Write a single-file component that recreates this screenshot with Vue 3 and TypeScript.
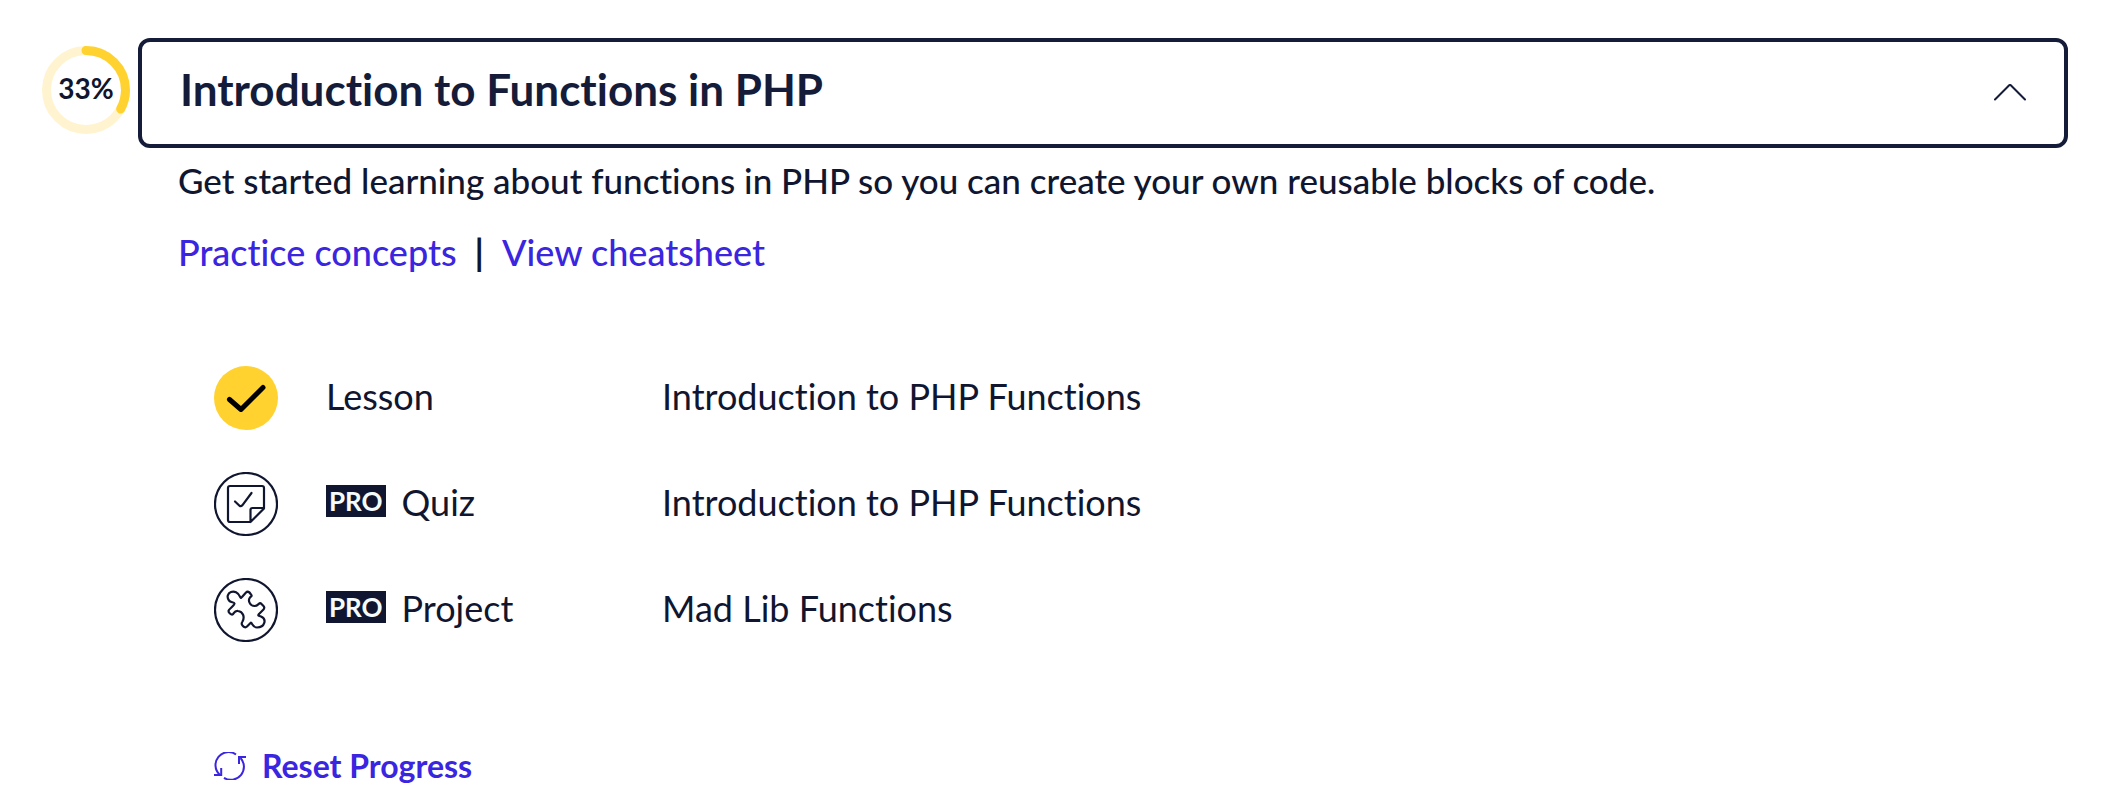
<script setup lang="ts">
import { computed, ref } from 'vue'

type Status = 'done' | 'quiz' | 'project'

interface Item {
  status: Status
  pro: boolean
  kind: string
  title: string
}

const open = ref(true)
const percent = ref(33)

const items: Item[] = [
  { status: 'done', pro: false, kind: 'Lesson', title: 'Introduction to PHP Functions' },
  { status: 'quiz', pro: true, kind: 'Quiz', title: 'Introduction to PHP Functions' },
  { status: 'project', pro: true, kind: 'Project', title: 'Mad Lib Functions' },
]

const dash = computed(() => `${percent.value} 100`)
</script>

<template>
  <main class="module">
    <div class="ring">
      <svg viewBox="0 0 88 88" aria-hidden="true">
        <circle class="track" cx="44" cy="44" r="39.5" />
        <circle
          class="value"
          cx="44"
          cy="44"
          r="39.5"
          pathLength="100"
          :stroke-dasharray="dash"
          transform="rotate(-90 44 44)"
        />
      </svg>
      <span class="percent">{{ percent }}%</span>
    </div>

    <section class="body">
      <h2 class="heading">
        <button class="toggle" type="button" :aria-expanded="open" @click="open = !open">
          <span class="label">Introduction to Functions in PHP</span>
          <svg class="chevron" :class="{ closed: !open }" viewBox="0 0 32 18" aria-hidden="true">
            <path d="M1 15.500 15.200 1.300q.8-.8 1.600 0L31 15.500" />
          </svg>
        </button>
      </h2>

      <div v-if="open" class="panel">
        <p class="description">
          Get started learning about functions in PHP so you can create your own reusable blocks of code.
        </p>
        <nav class="links">
          <a href="#practice">Practice concepts</a>
          <span class="bar">|</span>
          <a href="#cheatsheet">View cheatsheet</a>
        </nav>

        <ul class="items">
          <li v-for="item in items" :key="item.kind" class="item">
            <svg v-if="item.status === 'done'" class="icon" viewBox="0 0 64 64" aria-hidden="true">
              <circle cx="32" cy="32" r="32" fill="#ffd22f" />
              <path d="M15.5 33.5 27 43.500 49 21.500" fill="none" stroke="#000" stroke-width="5" stroke-linecap="round" stroke-linejoin="round" />
            </svg>
            <svg v-else-if="item.status === 'quiz'" class="icon line" viewBox="0 0 64 64" aria-hidden="true">
              <circle cx="32" cy="32" r="31" />
              <path d="M36.500 50H16q-2 0-2-2V16q0-2 2-2h32q2 0 2 2v20.500L36.500 50V38q0-2 2-2H50" />
              <path d="M21 29.500 25.500 33.800q1.500 1 2.800-.5L37.500 21" />
            </svg>
            <svg v-else class="icon line" viewBox="0 0 64 64" aria-hidden="true">
              <circle cx="32" cy="32" r="31" />
              <path
                d="M26.500 19.500C22 8.500 9.500 15 15 22.500C16.500 24.500 20 24 20.500 25.500C21 27 14.500 31.500 14.500 33C14.500 34.500 17 37 18.500 36.500C20 36 20 32.500 24 33C29 33.500 31 39 28.500 43.500C27.500 45 27 46 28.500 47.500Q31 50.500 33 48.500L36.500 45C38 43.500 38 49.500 43 49.500C51 49.500 53 41 47 38.500C44.500 37.500 43.500 38 45 36L49.500 31.500Q51 29.500 49.500 28L47 25.500C45 24 44.500 28 40.500 28C36 28 33.500 22.500 36 19.500C37 18.500 38.500 18 37 16.500L35.500 14.500Q33.500 13 32 14.500L28 19Q27 20.500 26.500 19.500Z"
              />
            </svg>
            <span class="kind">
              <span v-if="item.pro" class="pro">PRO</span>
              <span>{{ item.kind }}</span>
            </span>
            <span class="title">{{ item.title }}</span>
          </li>
        </ul>

        <button class="reset" type="button">
          <svg viewBox="0 0 32 28" aria-hidden="true">
            <path d="M22 2.500A13 13 0 0 0 5.500 22.500M10 25.800A13 13 0 0 0 26.500 6" />
            <path d="M0 23H7.200V16M32 5H25V12" />
          </svg>
          <span>Reset Progress</span>
        </button>
      </div>
    </section>
  </main>
</template>

<style>
body {
  margin: 0;
  background: #fff;
}
</style>

<style scoped>
.module {
  display: grid;
  grid-template-columns: 88px minmax(0, 1fr);
  column-gap: 8px;
  padding: 38px 50px 0 42px;
  color: #10162f;
  font-family: Lato, "Liberation Sans", sans-serif;
  font-size: 36px;
  line-height: 44px;
  font-variant-ligatures: none;
}
.ring {
  display: grid;
  place-items: center;
  width: 88px;
  height: 88px;
  margin-top: 8px;
}
.ring > * {
  grid-area: 1 / 1;
}
.ring svg {
  width: 88px;
  height: 88px;
}
.ring circle {
  fill: none;
  stroke-width: 9;
}
.ring .track {
  stroke: #fff4cf;
}
.ring .value {
  stroke: #ffd22f;
  stroke-linecap: round;
}
.percent {
  padding-bottom: 4px;
  font-size: 28px;
  font-weight: 700;
}
.heading {
  margin: 0;
}
.toggle {
  display: flex;
  align-items: center;
  justify-content: space-between;
  box-sizing: border-box;
  width: 100%;
  min-height: 110px;
  padding: 0 38px;
  border: 4px solid #141c3a;
  border-radius: 12px;
  background: #fff;
  color: #141c3a;
  font: inherit;
  font-variant-ligatures: none;
  font-size: 44px;
  font-weight: 700;
  text-align: left;
  cursor: pointer;
}
.label {
  padding-bottom: 8px;
}
.chevron {
  width: 32px;
  height: 18px;
  fill: none;
  stroke: currentColor;
  stroke-width: 2;
  stroke-linecap: round;
}
.chevron.closed {
  transform: rotate(180deg);
}
.panel {
  padding: 10px 0 0 40px;
}
.description {
  margin: 0 0 28px;
  font-size: 35px;
  font-weight: 500;
}
.links {
  display: flex;
  gap: 18px;
  font-weight: 500;
}
.links a {
  color: #3a25e0;
  text-decoration: none;
}
.bar {
  font-weight: 700;
}
.items {
  display: grid;
  gap: 42px;
  margin: 92px 0 0;
  padding: 0 0 0 36px;
  list-style: none;
}
.item {
  display: grid;
  grid-template-columns: 64px 288px minmax(0, 1fr);
  column-gap: 48px;
  align-items: center;
}
.icon {
  width: 64px;
  height: 64px;
}
.line {
  fill: none;
  stroke: #10162f;
  stroke-width: 2.2;
  stroke-linejoin: round;
  stroke-linecap: round;
}
.kind,
.title {
  padding-bottom: 4px;
}
.kind {
  display: flex;
  align-items: center;
  gap: 16px;
}
.pro {
  margin-bottom: 2px;
  padding: 0 3px;
  background: #10162f;
  color: #f5fcff;
  font-size: 26px;
  font-weight: 700;
  line-height: 32px;
}
.reset {
  display: flex;
  align-items: center;
  gap: 16px;
  margin: 102px 0 0 36px;
  padding: 0;
  border: 0;
  background: none;
  color: #3a25e0;
  font: inherit;
  font-variant-ligatures: none;
  font-size: 32px;
  font-weight: 700;
  cursor: pointer;
}
.reset svg {
  width: 32px;
  height: 28px;
  fill: none;
  stroke: currentColor;
  stroke-width: 2;
}
</style>
